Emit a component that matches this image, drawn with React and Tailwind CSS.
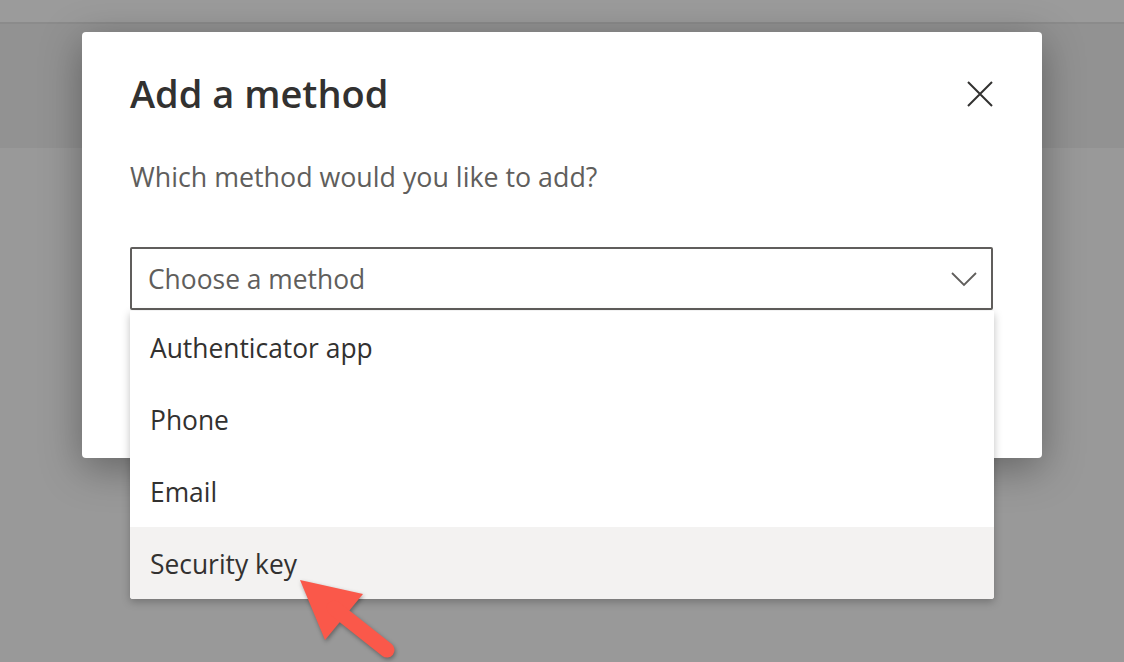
const methods = ["Authenticator app", "Phone", "Email", "Security key"];

function CloseIcon() {
  return (
    <svg width="26" height="26" viewBox="0 0 26 26" fill="none">
      <path d="M1 1L25 25M25 1L1 25" stroke="#323130" strokeWidth="2" />
    </svg>
  );
}

function Chevron() {
  return (
    <svg width="26" height="16" viewBox="0 0 26 16" fill="none">
      <path d="M1 2L13 14L25 2" stroke="#605e5c" strokeWidth="1.8" />
    </svg>
  );
}

function RedArrow() {
  // annotation arrow pointing at "Security key"
  return (
    <svg
      className="absolute left-[290px] top-[570px] drop-shadow-[1px_2px_2px_rgba(0,0,0,0.35)]"
      width="120"
      height="92"
      viewBox="0 0 120 92"
    >
      <path d="M10 10L73 24L35 70Z" fill="#fa584a" />
      <path d="M44 38L97 80" stroke="#fa584a" strokeWidth="15" strokeLinecap="round" />
    </svg>
  );
}

export default function App() {
  return (
    <div
      className="relative h-[662px] w-[1124px] overflow-hidden bg-[#999999]"
      style={{ fontFamily: '"Open Sans", "Noto Sans", sans-serif' }}
    >
      {/* dimmed page behind the dialog */}
      <div className="h-[22px] bg-[#9b9b9b]" />
      <div className="h-[2px] bg-[#8b8b8b]" />
      <div className="h-[124px] bg-[#929292]" />

      {/* dialog */}
      <div className="absolute left-[82px] top-[32px] h-[426px] w-[960px] rounded-[4px] bg-white shadow-[0_10px_40px_rgba(0,0,0,0.35)]">
        <div className="flex items-start justify-between pl-[48px] pr-[49px] pt-[37px]">
          <h1 className="text-[38px] font-semibold leading-[48px] text-[#323130]">
            Add a method
          </h1>
          <button className="mt-[12px]">
            <CloseIcon />
          </button>
        </div>
        <p className="mt-[43px] pl-[48px] text-[26.8px] leading-[34px] text-[#605e5c]">
          Which method would you like to add?
        </p>
        <div className="ml-[48px] mt-[53px] flex h-[63px] w-[863px] items-center justify-between rounded-[2px] border-2 border-[#605e5c] pl-[16px] pr-[14px]">
          <span className="pt-[3px] text-[26.4px] text-[#605e5c]">Choose a method</span>
          <Chevron />
        </div>
      </div>

      {/* dropdown list */}
      <ul className="absolute left-[130px] top-[311px] w-[864px] overflow-hidden rounded-b-[3px] bg-white shadow-[0_3px_8px_rgba(0,0,0,0.25)]">
        {methods.map((m, i) => (
          <li
            key={m}
            className={`flex h-[72px] items-center pl-[20px] pt-[3px] text-[26.4px] text-[#323130] ${
              i === 3 ? "bg-[#f3f2f1]" : ""
            }`}
          >
            {m}
          </li>
        ))}
      </ul>

      <RedArrow />
    </div>
  );
}
